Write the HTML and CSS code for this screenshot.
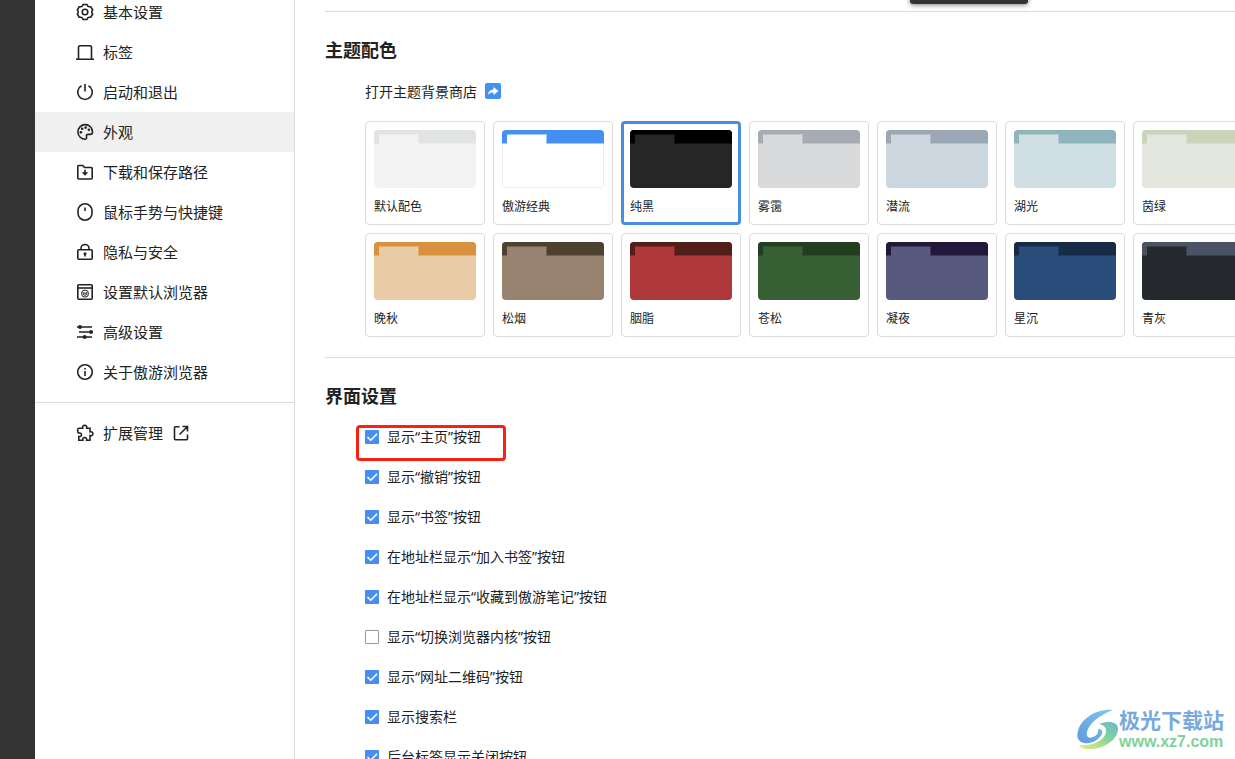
FILE: index.html
```html
<!DOCTYPE html>
<html lang="zh-CN">
<head>
<meta charset="utf-8">
<title>外观</title>
<link rel="stylesheet" href="styles.css">
</head>
<body>
<div class="rail"></div>
<aside class="sidebar">
  <nav class="nav">
    <a class="nav-item" href="#"><svg class="icon" viewBox="0 0 18 18"><path d="M6.2 3.1 7.1 1.500h3.800l.9 1.600 1.200.7h1.800L16.700 7l-.9 1.400v1.200l.9 1.400-1.900 3.200H13l-1.200.7-.9 1.600H7.100l-.9-1.600-1.200-.7H3.200L1.300 11l.9-1.400V8.400L1.300 7l1.900-3.200H5z"/><circle cx="9" cy="9" r="2.800"/></svg>基本设置</a>
    <a class="nav-item" href="#"><svg class="icon" viewBox="0 0 18 18"><path d="M0 16.200H18M2.500 16V4.200A1.500 1.500 0 0 1 4 2.700h10a1.500 1.500 0 0 1 1.500 1.500V16"/></svg>标签</a>
    <a class="nav-item" href="#"><svg class="icon" viewBox="0 0 18 18"><path d="M9 1v7.500M5.500 2.800a7.300 7.300 0 1 0 7 0"/></svg>启动和退出</a>
    <a class="nav-item nav-item-active" href="#" aria-current="page"><svg class="icon" viewBox="0 0 18 18"><path d="M9.500 16.200A7.300 7.300 0 1 1 16.500 9c0 1.800-.8 2.400-2.300 2.400h-2c-1.600 0-2 1-1.700 2.200.3 1.300.1 2.600-1 2.600z"/><g class="solid"><circle cx="4.900" cy="9.200" r="1.300"/><circle cx="6.200" cy="5.800" r="1.300"/><circle cx="9.700" cy="4.600" r="1.300"/><circle cx="12.900" cy="6.800" r="1.300"/></g></svg>外观</a>
    <a class="nav-item" href="#"><svg class="icon" viewBox="0 0 18 18"><path d="M1.800 15V3.500a1 1 0 0 1 1-1h4l1.700 2h6.700a1 1 0 0 1 1 1V15a1 1 0 0 1-1 1H2.800a1 1 0 0 1-1-1zM9 6.800v5"/><path class="solid" d="M5.700 9.200h6.600L9 12.800z"/></svg>下载和保存路径</a>
    <a class="nav-item" href="#"><svg class="icon" viewBox="0 0 18 18"><rect x="2" y=".8" width="14" height="16.400" rx="7"/><path d="M9 4.500v3.500"/></svg>鼠标手势与快捷键</a>
    <a class="nav-item" href="#"><svg class="icon" viewBox="0 0 18 18"><rect x="1.800" y="6.800" width="14.400" height="9.400" rx="1"/><path d="M5 6.500V5.500a4 4 0 0 1 8 0v1M9 10.500v3"/><circle class="solid" cx="9" cy="10.700" r="1.500"/></svg>隐私与安全</a>
    <a class="nav-item" href="#"><svg class="icon" viewBox="0 0 18 18"><rect x="1.800" y="1.800" width="14.400" height="14.400" rx="1"/><path d="M2 5h14"/><circle class="thin" cx="9" cy="10.600" r="3.500"/><path class="thin" d="M7.200 9.200v1.500q0 1.500 1.800 1.500t1.800-1.500V9.200M7.400 10.100h3.200"/></svg>设置默认浏览器</a>
    <a class="nav-item" href="#"><svg class="icon" viewBox="0 0 18 18"><path d="M1 4h15M3 9h14M1 14h15"/><g class="solid"><circle cx="4" cy="4" r="1.900"/><circle cx="15" cy="9" r="1.900"/><circle cx="8.700" cy="14" r="1.900"/></g></svg>高级设置</a>
    <a class="nav-item" href="#"><svg class="icon" viewBox="0 0 18 18"><circle cx="9" cy="9" r="7.300"/><path d="M9 8v5M9 4.900v1.600"/></svg>关于傲游浏览器</a>
  </nav>
  <div class="nav-extra">
    <a class="nav-item" href="#"><svg class="icon" viewBox="0 0 18 18"><path d="M3 4.200h3.700C6.300 2.300 7.300 1.300 8.700 1.300s2.400 1 2 2.900H14v3.600c1.900-.4 2.900.5 2.900 1.900s-1 2.300-2.900 1.900v4.600h-3.400c.4-1.900-.5-2.700-1.900-2.700s-2.300.8-1.900 2.700H2.800v-3.700c1.900.3 2.700-.5 2.700-1.700s-.8-2-2.700-1.700C1.200 8.500 1.200 4.200 3 4.200z"/></svg>扩展管理<svg class="icon" viewBox="0 0 18 18"><path d="M7.500 2.700H3.500a1 1 0 0 0-1 1v11a1 1 0 0 0 1 1h11a1 1 0 0 0 1-1V10.500M10.500 2.500h5v5M15.300 2.700 7.500 10.500"/></svg></a>
  </div>
</aside>
<main class="content">
  <div class="popup-edge"></div>
  <section class="section">
    <h2 class="title">主题配色</h2>
    <div class="section-body">
      <a class="store" href="#">打开主题背景商店<svg class="store-icon" viewBox="0 0 16 16"><path d="M3 12c.2-3.600 2-5.500 5.500-5.600V4L13.500 8l-5 4V9.400C6 9.300 4.300 10 3 12z"/></svg></a>
      <div class="themes">
        <button class="theme theme-default"><span class="swatch"><span class="bar"><span class="tab"></span></span></span>默认配色</button>
        <button class="theme theme-classic"><span class="swatch"><span class="bar"><span class="tab"></span></span></span>傲游经典</button>
        <button class="theme theme-black" aria-pressed="true"><span class="swatch"><span class="bar"><span class="tab"></span></span></span>纯黑</button>
        <button class="theme theme-mist"><span class="swatch"><span class="bar"><span class="tab"></span></span></span>雾霭</button>
        <button class="theme theme-stream"><span class="swatch"><span class="bar"><span class="tab"></span></span></span>潜流</button>
        <button class="theme theme-lake"><span class="swatch"><span class="bar"><span class="tab"></span></span></span>湖光</button>
        <button class="theme theme-grass"><span class="swatch"><span class="bar"><span class="tab"></span></span></span>茵绿</button>
        <button class="theme theme-autumn"><span class="swatch"><span class="bar"><span class="tab"></span></span></span>晚秋</button>
        <button class="theme theme-smoke"><span class="swatch"><span class="bar"><span class="tab"></span></span></span>松烟</button>
        <button class="theme theme-rouge"><span class="swatch"><span class="bar"><span class="tab"></span></span></span>胭脂</button>
        <button class="theme theme-pine"><span class="swatch"><span class="bar"><span class="tab"></span></span></span>苍松</button>
        <button class="theme theme-night"><span class="swatch"><span class="bar"><span class="tab"></span></span></span>凝夜</button>
        <button class="theme theme-star"><span class="swatch"><span class="bar"><span class="tab"></span></span></span>星沉</button>
        <button class="theme theme-slate"><span class="swatch"><span class="bar"><span class="tab"></span></span></span>青灰</button>
      </div>
    </div>
  </section>
  <section class="section">
    <h2 class="title">界面设置</h2>
    <div class="section-body options">
      <label class="option option-marked"><input class="check" type="checkbox" checked>显示“主页”按钮</label>
      <label class="option"><input class="check" type="checkbox" checked>显示“撤销”按钮</label>
      <label class="option"><input class="check" type="checkbox" checked>显示“书签”按钮</label>
      <label class="option"><input class="check" type="checkbox" checked>在地址栏显示“加入书签”按钮</label>
      <label class="option"><input class="check" type="checkbox" checked>在地址栏显示“收藏到傲游笔记”按钮</label>
      <label class="option"><input class="check" type="checkbox">显示“切换浏览器内核”按钮</label>
      <label class="option"><input class="check" type="checkbox" checked>显示“网址二维码”按钮</label>
      <label class="option"><input class="check" type="checkbox" checked>显示搜索栏</label>
      <label class="option"><input class="check" type="checkbox" checked>后台标签显示关闭按钮</label>
    </div>
  </section>
</main>
<div class="watermark">
  <svg class="watermark-logo" viewBox="0 0 42 42">
    <defs>
      <linearGradient id="blue" x1="0" y1="1" x2="1" y2="0"><stop offset="0" stop-color="#5b9bdc"/><stop offset="1" stop-color="#86c6ee"/></linearGradient>
      <linearGradient id="green" x1="0" y1="1" x2="1" y2="0"><stop offset="0" stop-color="#e9ec7c"/><stop offset=".6" stop-color="#7fd39a"/><stop offset="1" stop-color="#6fb4d4"/></linearGradient>
    </defs>
    <path fill="url(#blue)" d="M36 1C21-1 4 9 1 22c-2 7 1 11 6 12 7 1 14-2 18-9 1-3 0-5-4-5 1 3-1 7-5 8-4 2-7 0-6-5C12 14 23 6 36 1z"/>
    <path fill="url(#green)" d="M22 15c10-4 20-2 19 6C40 31 26 41 11 40c-5 0-8-2-9-4 8 1 17-1 23-6 6-6 6-13-3-15z"/>
  </svg>
  <div class="watermark-text">
    <span class="watermark-name">极光下载站</span>
    <span class="watermark-url">www.xz7.com</span>
  </div>
</div>
</body>
</html>
```
FILE: styles.css
```css
* {
  box-sizing: border-box;
}

body {
  position: relative;
  display: flex;
  height: 100vh;
  margin: 0;
  overflow: hidden;
  background: #fff;
  color: #222;
  font-family: "Noto Sans", "Noto Sans CJK SC", sans-serif;
  font-size: 14px;
}

a {
  color: inherit;
  text-decoration: none;
}

.rail {
  flex: 0 0 35px;
  background: #333;
}

.sidebar {
  flex: 0 0 260px;
  border-right: 1px solid #dcdcdc;
}

/* The list is scrolled slightly past its first row. */
.nav {
  margin-top: -8px;
  padding-bottom: 10px;
  border-bottom: 1px solid #dcdcdc;
}

.nav-extra {
  padding-top: 10px;
}

.nav-item {
  display: flex;
  align-items: center;
  gap: 9px;
  height: 40px;
  padding-left: 41px;
  font-size: 15px;
  line-height: 20px;
}

.nav-item-active {
  background: #f0f0f0;
}

.icon {
  width: 18px;
  height: 18px;
  fill: none;
  stroke: #222;
  stroke-width: 1.6;
}

.icon .solid {
  fill: #222;
  stroke: none;
}

.icon .thin {
  stroke-width: 1;
}

.content {
  position: relative;
  flex: 1;
  min-width: 0;
  padding: 11px 0 0 30px;
  overflow: hidden;
}

.popup-edge {
  position: absolute;
  top: -8px;
  right: 207px;
  width: 118px;
  height: 12px;
  border-radius: 3px;
  background: #333;
  box-shadow: 0 1px 5px rgba(0, 0, 0, 0.5);
}

.section {
  padding: 26px 0 20px;
  border-top: 1px solid #dcdcdc;
}

.title {
  margin: 0 0 9px;
  font-size: 18px;
  line-height: 24px;
}

.section-body {
  padding-left: 40px;
}

.store {
  display: flex;
  align-items: center;
  gap: 8px;
  height: 40px;
  margin-bottom: 10px;
}

.store-icon {
  width: 16px;
  height: 16px;
  border-radius: 2px;
  background: #458ff3;
  fill: #fff;
}

.themes {
  display: grid;
  grid-template-columns: repeat(7, 120px);
  gap: 8px;
}

.theme {
  padding: 8px;
  border: 1px solid #dcdcdc;
  border-radius: 4px;
  background: #fff;
  color: #222;
  font-family: inherit;
  font-size: 12px;
  line-height: 18px;
  text-align: left;
}

.theme[aria-pressed="true"] {
  padding: 6px;
  border: 3px solid #4a8de0;
}

.swatch {
  display: block;
  height: 58px;
  margin-bottom: 10px;
  border-radius: 4px;
  background: var(--page);
  overflow: hidden;
}

.bar {
  display: block;
  height: 14px;
  padding: 4px 5px 0;
  background: var(--bar);
  box-shadow: inset 0 -1px color-mix(in srgb, var(--bar), var(--page));
}

.tab {
  display: block;
  width: 40px;
  height: 10px;
  background: var(--page);
  box-shadow: inset -1px 1px color-mix(in srgb, var(--bar), var(--page));
}

.theme-default { --bar: #e1e4e3; --page: #f3f3f3; }
.theme-classic { --bar: #458ff3; --page: #fff; }
.theme-black { --bar: #000; --page: #262626; }
.theme-mist { --bar: #a6abb4; --page: #d9dadc; }
.theme-stream { --bar: #9ba7b5; --page: #ccd6df; }
.theme-lake { --bar: #8fb4bc; --page: #d0dfe3; }
.theme-grass { --bar: #cbd3ba; --page: #e3e7dd; }
.theme-autumn { --bar: #d8923f; --page: #e9cca5; }
.theme-smoke { --bar: #4d4130; --page: #988370; }
.theme-rouge { --bar: #521e1c; --page: #af393a; }
.theme-pine { --bar: #233d20; --page: #365f33; }
.theme-night { --bar: #21183a; --page: #57597f; }
.theme-star { --bar: #182b46; --page: #2a4c7b; }
.theme-slate { --bar: #495364; --page: #26292e; }

.theme-classic .swatch {
  background: linear-gradient(#fff, #fff) 1px 0 / calc(100% - 2px) 57px no-repeat #ededed;
}

.options {
  display: flex;
  flex-direction: column;
  align-items: flex-start;
}

.option {
  position: relative;
  display: flex;
  align-items: center;
  gap: 8px;
  height: 40px;
  line-height: 20px;
  white-space: nowrap;
}

.option-marked::after {
  content: "";
  box-sizing: border-box;
  position: absolute;
  top: 8px;
  left: -9px;
  width: 150px;
  height: 36px;
  border: 3px solid #fb2014;
  border-radius: 4px;
}

.check {
  appearance: none;
  width: 14px;
  height: 14px;
  margin: 0;
  border: 1px solid #999;
  border-radius: 1px;
  background: #fff;
}

.check:checked {
  border: 0;
  background: #458ff3 url("data:image/svg+xml,%3Csvg xmlns='http://www.w3.org/2000/svg' viewBox='0 0 14 14'%3E%3Cpath d='M2.5 7 5.7 10.2 12 3.9' fill='none' stroke='white' stroke-width='1.5'/%3E%3C/svg%3E");
}

.watermark {
  position: absolute;
  right: 11px;
  bottom: 7px;
  display: flex;
  align-items: center;
}

.watermark-logo {
  width: 42px;
  height: 42px;
}

.watermark-text {
  display: flex;
  flex-direction: column;
  font-weight: bold;
}

.watermark-name {
  color: #78a9dc;
  font-size: 21px;
  line-height: 24px;
}

.watermark-url {
  color: #80d29c;
  font-family: "Liberation Sans", Arial, sans-serif;
  font-size: 16px;
  line-height: 20px;
}
```
